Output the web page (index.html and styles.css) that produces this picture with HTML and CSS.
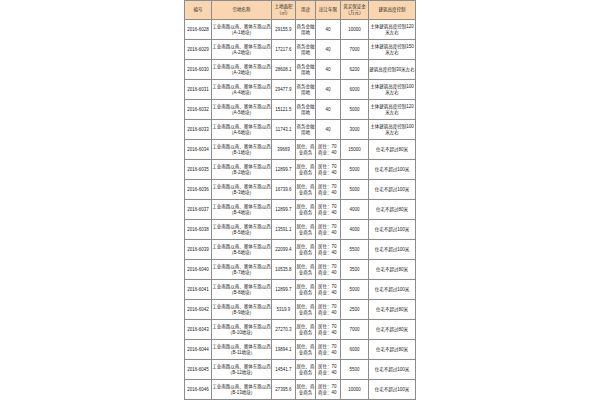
FILE: index.html
```html
<!DOCTYPE html>
<html lang="zh">
<head>
<meta charset="utf-8">
<link rel="stylesheet" href="styles.css">
</head>
<body>
<table class="land">
<colgroup>
<col class="c-id"><col class="c-name"><col class="c-area"><col class="c-use"><col class="c-year"><col class="c-dep"><col class="c-h">
</colgroup>
<thead>
<tr><th>编号</th><th>宗地名称</th><th>土地面积<br>（㎡）</th><th>用途</th><th>出让年限</th><th>竞买保证金<br>（万元）</th><th>建筑高度控制</th></tr>
</thead>
<tbody>
<tr><td>2016-6028</td><td>工业南路以南、奥体东路以西<br>（A-1地块）</td><td>29155.9</td><td>商务金融<br>用地</td><td>40</td><td>10000</td><td>主体建筑高度控制120<br>米左右</td></tr>
<tr><td>2016-6029</td><td>工业南路以南、奥体东路以西<br>（A-2地块）</td><td>17217.6</td><td>商务金融<br>用地</td><td>40</td><td>7000</td><td>主体建筑高度控制150<br>米左右</td></tr>
<tr><td>2016-6030</td><td>工业南路以南、奥体东路以西<br>（A-3地块）</td><td>28608.1</td><td>商务金融<br>用地</td><td>40</td><td>6200</td><td>建筑高度控制30米左右</td></tr>
<tr><td>2016-6031</td><td>工业南路以南、奥体东路以西<br>（A-4地块）</td><td>29477.9</td><td>商务金融<br>用地</td><td>40</td><td>6000</td><td>主体建筑高度控制100<br>米左右</td></tr>
<tr><td>2016-6032</td><td>工业南路以南、奥体东路以西<br>（A-5地块）</td><td>15121.5</td><td>商务金融<br>用地</td><td>40</td><td>5000</td><td>主体建筑高度控制120<br>米左右</td></tr>
<tr><td>2016-6033</td><td>工业南路以南、奥体东路以西<br>（A-6地块）</td><td>11743.1</td><td>商务金融<br>用地</td><td>40</td><td>3000</td><td>主体建筑高度控制100<br>米左右</td></tr>
<tr><td>2016-6034</td><td>工业南路以南、奥体东路以西<br>（B-1地块）</td><td>39669</td><td>居住、商<br>业商务</td><td class="yr">居住：70<br>商业：40</td><td>15000</td><td>住宅不超过80米</td></tr>
<tr><td>2016-6035</td><td>工业南路以南、奥体东路以西<br>（B-2地块）</td><td>12899.7</td><td>居住、商<br>业商务</td><td class="yr">居住：70<br>商业：40</td><td>5000</td><td>住宅不超过100米</td></tr>
<tr><td>2016-6036</td><td>工业南路以南、奥体东路以西<br>（B-3地块）</td><td>16739.6</td><td>居住、商<br>业商务</td><td class="yr">居住：70<br>商业：40</td><td>5000</td><td>住宅不超过100米</td></tr>
<tr><td>2016-6037</td><td>工业南路以南、奥体东路以西<br>（B-4地块）</td><td>12899.7</td><td>居住、商<br>业商务</td><td class="yr">居住：70<br>商业：40</td><td>4000</td><td>住宅不超过80米</td></tr>
<tr><td>2016-6038</td><td>工业南路以南、奥体东路以西<br>（B-5地块）</td><td>13591.1</td><td>居住、商<br>业商务</td><td class="yr">居住：70<br>商业：40</td><td>4000</td><td>住宅不超过100米</td></tr>
<tr><td>2016-6039</td><td>工业南路以南、奥体东路以西<br>（B-6地块）</td><td>22099.4</td><td>居住、商<br>业商务</td><td class="yr">居住：70<br>商业：40</td><td>5500</td><td>住宅不超过100米</td></tr>
<tr><td>2016-6040</td><td>工业南路以南、奥体东路以西<br>（B-7地块）</td><td>10535.8</td><td>居住、商<br>业商务</td><td class="yr">居住：70<br>商业：40</td><td>3500</td><td>住宅不超过80米</td></tr>
<tr><td>2016-6041</td><td>工业南路以南、奥体东路以西<br>（B-8地块）</td><td>12899.7</td><td>居住、商<br>业商务</td><td class="yr">居住：70<br>商业：40</td><td>5000</td><td>住宅不超过100米</td></tr>
<tr><td>2016-6042</td><td>工业南路以南、奥体东路以西<br>（B-9地块）</td><td>5319.9</td><td>居住、商<br>业商务</td><td class="yr">居住：70<br>商业：40</td><td>2500</td><td>住宅不超过80米</td></tr>
<tr><td>2016-6043</td><td>工业南路以南、奥体东路以西<br>（B-10地块）</td><td>27270.3</td><td>居住、商<br>业商务</td><td class="yr">居住：70<br>商业：40</td><td>7000</td><td>住宅不超过80米</td></tr>
<tr><td>2016-6044</td><td>工业南路以南、奥体东路以西<br>（B-11地块）</td><td>19894.1</td><td>居住、商<br>业商务</td><td class="yr">居住：70<br>商业：40</td><td>6000</td><td>住宅不超过80米</td></tr>
<tr><td>2016-6045</td><td>工业南路以南、奥体东路以西<br>（B-12地块）</td><td>14541.7</td><td>居住、商<br>业商务</td><td class="yr">居住：70<br>商业：40</td><td>5500</td><td>住宅不超过100米</td></tr>
<tr><td>2016-6046</td><td>工业南路以南、奥体东路以西<br>（B-13地块）</td><td>27395.6</td><td>居住、商<br>业商务</td><td class="yr">居住：70<br>商业：40</td><td>10000</td><td>住宅不超过100米</td></tr>
</tbody>
</table>
</body>
</html>
```
FILE: styles.css
```css
html, body {
  margin: 0;
  padding: 0;
  background: #ffffff;
}
.land {
  margin: 0 auto;
  width: 231px;
  table-layout: fixed;
  border-collapse: collapse;
  font-family: "Liberation Sans", "Noto Sans CJK SC", sans-serif;
  font-size: 4.5px;
  line-height: 6px;
  color: #222222;
}
.c-id { width: 27px; }
.c-name { width: 60px; }
.c-area { width: 24px; }
.c-use { width: 20px; }
.c-year { width: 25px; }
.c-dep { width: 28px; }
.c-h { width: 47px; }
.land th, .land td {
  border: 1px solid #8c8c8c;
  padding: 0;
  text-align: center;
  vertical-align: middle;
  white-space: nowrap;
  overflow: hidden;
}
.land th {
  height: 18px;
  background: #f9d5b0;
  font-weight: normal;
  color: #2e2e2e;
}
.land td {
  height: 19px;
}
.land td.yr {
  text-align: left;
  padding-left: 2px;
}
```
